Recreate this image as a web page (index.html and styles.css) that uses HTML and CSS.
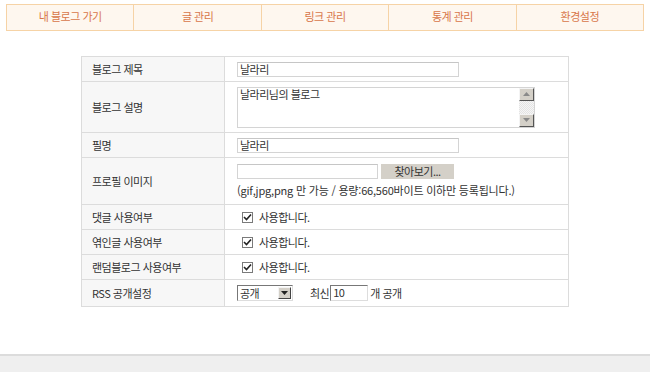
FILE: index.html
```html
<!DOCTYPE html>
<html lang="ko">

<head>
    <meta charset="UTF-8">
    <title>환경설정</title>
    <link rel="stylesheet" href="styles.css">
</head>

<body>
    <ul class="menu">
        <li><a href="#">내 블로그 가기</a></li>
        <li><a href="#">글 관리</a></li>
        <li><a href="#">링크 관리</a></li>
        <li><a href="#">통계 관리</a></li>
        <li><a href="#">환경설정</a></li>
    </ul>

    <div class="content">
        <table class="setting">
            <tr class="row-title">
                <th>블로그 제목</th>
                <td><div class="input wide">날라리</div></td>
            </tr>
            <tr class="row-desc">
                <th>블로그 설명</th>
                <td>
                    <div class="textarea">
                        <div class="textarea-text">날라리님의 블로그</div>
                        <div class="scrollbar">
                            <span class="scroll-btn">
                                <svg width="7" height="4" viewBox="0 0 7 4"><path d="M3.5 0 L7 4 L0 4 Z" fill="#8a8a8a"/></svg>
                            </span>
                            <span class="scroll-track"></span>
                            <span class="scroll-btn">
                                <svg width="7" height="4" viewBox="0 0 7 4"><path d="M0 0 L7 0 L3.5 4 Z" fill="#8a8a8a"/></svg>
                            </span>
                        </div>
                    </div>
                </td>
            </tr>
            <tr class="row-title">
                <th>필명</th>
                <td><div class="input wide">날라리</div></td>
            </tr>
            <tr class="row-file">
                <th>프로필 이미지</th>
                <td>
                    <div class="file">
                        <div class="input file-box"></div>
                        <span class="file-btn">찾아보기...</span>
                    </div>
                    <p class="hint">(gif,jpg,png 만 가능 / 용량:66,560바이트 이하만 등록됩니다.)</p>
                </td>
            </tr>
            <tr>
                <th>댓글 사용여부</th>
                <td><label class="check"><span class="box"><svg width="9" height="9" viewBox="0 0 9 9"><path d="M1 4 L3.5 6.5 L8 1.5" fill="none" stroke="#222" stroke-width="1.6"/></svg></span>사용합니다.</label></td>
            </tr>
            <tr>
                <th>엮인글 사용여부</th>
                <td><label class="check"><span class="box"><svg width="9" height="9" viewBox="0 0 9 9"><path d="M1 4 L3.5 6.5 L8 1.5" fill="none" stroke="#222" stroke-width="1.6"/></svg></span>사용합니다.</label></td>
            </tr>
            <tr>
                <th>랜덤블로그 사용여부</th>
                <td><label class="check"><span class="box"><svg width="9" height="9" viewBox="0 0 9 9"><path d="M1 4 L3.5 6.5 L8 1.5" fill="none" stroke="#222" stroke-width="1.6"/></svg></span>사용합니다.</label></td>
            </tr>
            <tr class="row-rss">
                <th>RSS 공개설정</th>
                <td>
                    <div class="rss">
                        <div class="select">
                            <span class="select-value">공개</span>
                            <span class="select-arrow">
                                <svg width="7" height="4" viewBox="0 0 7 4"><path d="M0 0 L7 0 L3.5 4 Z" fill="#222"/></svg>
                            </span>
                        </div>
                        <span class="recent">최신</span>
                        <div class="input count">10</div>
                        <span>개 공개</span>
                    </div>
                </td>
            </tr>
        </table>
    </div>

    <div class="footer"></div>
</body>

</html>
```

FILE: styles.css
```css
* {
    margin: 0;
    padding: 0;
    box-sizing: border-box;
}

body {
    font-family: "Noto Sans CJK KR", "Noto Sans", sans-serif;
    font-size: 11px;
    letter-spacing: -0.5px;
    color: #333;
    background: #fff;
    min-height: 372px;
    display: flex;
    flex-direction: column;
}

/* Menu */
.menu {
    list-style: none;
    display: flex;
    margin: 4px 6px 0;
    height: 27px;
    border: 1px solid #f6d3a6;
    background: #fef7ef;
}

.menu li {
    flex: 1;
    display: flex;
    align-items: center;
    justify-content: center;
    border-left: 1px solid #f6d3a6;
    padding-bottom: 3px;
}

.menu li:first-child {
    border-left: none;
}

.menu a {
    color: #d8764a;
    text-decoration: none;
}

/* Setting table */
.content {
    padding: 25px 0 47px;
}

.setting {
    width: 488px;
    margin: 0 auto;
    border-collapse: collapse;
    border: 1px solid #dcdcdc;
}

.setting th,
.setting td {
    border-top: 1px solid #dcdcdc;
    height: 25px;
    vertical-align: middle;
    text-align: left;
    font-weight: normal;
}

.setting th {
    width: 143px;
    padding-left: 10px;
    background: #f7f7f7;
    border-right: 1px solid #dcdcdc;
}

.setting td {
    padding-left: 12px;
}

.row-desc td {
    height: 51px;
}

.row-file td {
    height: 47px;
}

.row-rss td {
    height: 27px;
}

.input {
    height: 15px;
    border: 1px solid #d4d4d4;
    border-top-color: #c6c6c6;
    background: #fff;
    padding: 0 2px;
    line-height: 13px;
}

.wide {
    width: 222px;
}

.textarea {
    display: flex;
    width: 298px;
    height: 41px;
    border: 1px solid #d4d4d4;
    background: #fff;
}

.textarea-text {
    flex: 1;
    padding: 0 2px;
    line-height: 13px;
}

.scrollbar {
    width: 15px;
    display: flex;
    flex-direction: column;
    background: repeating-conic-gradient(#e4e4e4 0 25%, #f6f6f6 0 50%) 0 0 / 2px 2px;
}

.scroll-btn {
    height: 13px;
    display: flex;
    align-items: center;
    justify-content: center;
    background: #d4d0c8;
    border: 1px solid;
    border-color: #f4f4f4 #555 #555 #f4f4f4;
}

.scroll-track {
    flex: 1;
}

.file {
    display: flex;
    align-items: center;
    gap: 3px;
}

.file-box {
    width: 141px;
}

.file-btn {
    width: 73px;
    height: 15px;
    background: #d4d0c8;
    line-height: 15px;
    text-align: center;
}

.hint {
    margin-top: 3px;
    letter-spacing: -0.2px;
}

.check {
    display: flex;
    align-items: center;
    gap: 6px;
    padding-left: 5px;
}

.box {
    width: 11px;
    height: 11px;
    border: 1px solid #7a7a7a;
    background: #fff;
    display: flex;
    align-items: center;
    justify-content: center;
}

.rss {
    display: flex;
    align-items: center;
}

.select {
    display: flex;
    width: 56px;
    height: 16px;
    border: 1px solid;
    border-color: #777 #ddd #ddd #777;
    background: #fff;
    padding: 1px;
}

.select-value {
    flex: 1;
    line-height: 12px;
    padding-left: 1px;
}

.select-arrow {
    width: 13px;
    display: flex;
    align-items: center;
    justify-content: center;
    background: #d4d0c8;
    border: 1px solid;
    border-color: #f4f4f4 #444 #444 #f4f4f4;
}

.recent {
    margin-left: 17px;
}

.count {
    width: 38px;
    height: 16px;
    border-color: #777 #ddd #ddd #777;
    margin: 0 2px 0 1px;
}

/* Footer */
.footer {
    flex: 1;
    border-top: 2px solid #dcdcdc;
    background: #efefef;
}
```
